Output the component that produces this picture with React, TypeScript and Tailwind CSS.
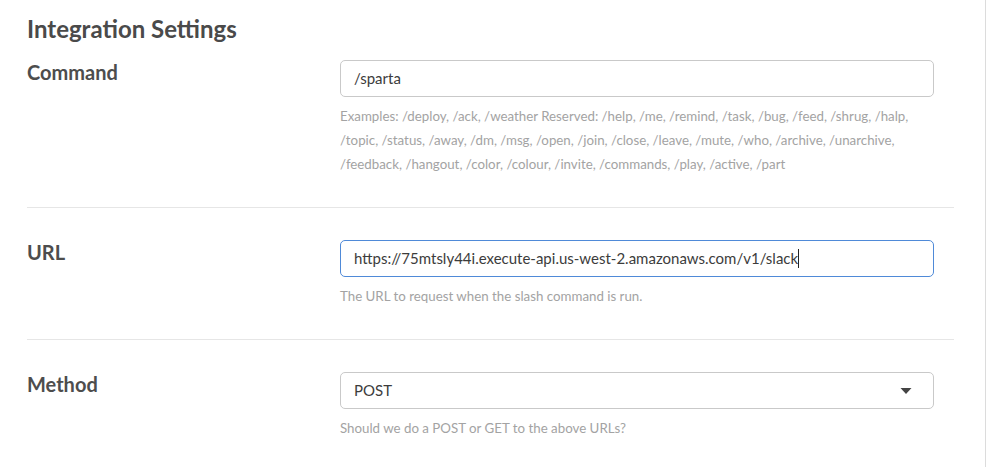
import React from "react";

const reserved =
  "Examples: /deploy, /ack, /weather Reserved: /help, /me, /remind, /task, /bug, /feed, /shrug, /halp, /topic, /status, /away, /dm, /msg, /open, /join, /close, /leave, /mute, /who, /archive, /unarchive, /feedback, /hangout, /color, /colour, /invite, /commands, /play, /active, /part";

export default function App() {
  return (
    <div className="w-[987px] h-[467px] bg-white overflow-hidden font-['Lato','Liberation_Sans',sans-serif]">
      <div className="w-[986px] h-full border-r border-[#dcdcdc] pl-[27px]">
        <div className="w-[927px]">
          <h2 className="text-[24px] leading-[30px] font-bold text-[#4a4a4a] pt-[14px]">
            Integration Settings
          </h2>

          {/* Command */}
          <FieldRow label="Command" className="pt-[16px] pb-[31px]">
            <TextBox value="/sparta" />
            <Help>{reserved}</Help>
          </FieldRow>

          {/* URL */}
          <FieldRow label="URL" className="border-t border-[#e6e6e6] pt-[32px] pb-[31px]">
            <TextBox
              value="https://75mtsly44i.execute-api.us-west-2.amazonaws.com/v1/slack"
              focused
            />
            <Help>The URL to request when the slash command is run.</Help>
          </FieldRow>

          {/* Method */}
          <FieldRow label="Method" className="border-t border-[#e6e6e6] pt-[32px] pb-[31px]">
            <div className="h-[37px] rounded-[5px] border border-[#c9c9c9] bg-white flex items-center justify-between pl-[13px] pr-[21px] text-[15px] text-[#3c3c3c]">
              <span>POST</span>
              <svg width="12" height="6" viewBox="0 0 12 6">
                <path d="M0.5 0 H11.5 L6 6 Z" fill="#444" />
              </svg>
            </div>
            <Help>Should we do a POST or GET to the above URLs?</Help>
          </FieldRow>
        </div>
      </div>
    </div>
  );
}

const FieldRow = ({ label, className, children }: any) => (
  <div className={`flex ${className}`}>
    <div className="w-[313px] shrink-0 text-[20px] leading-[24px] font-bold text-[#4d4d4d]">
      {label}
    </div>
    <div className="w-[594px]">{children}</div>
  </div>
);

const TextBox = ({ value, focused }: any) => (
  <div
    className={`h-[37px] rounded-[5px] border bg-white flex items-center pl-[13px] text-[15px] text-[#3c3c3c] whitespace-nowrap ${
      focused ? "border-[#4f8ad8]" : "border-[#c9c9c9]"
    }`}
  >
    <span>{value}</span>
    {focused && <span className="inline-block w-px h-[19px] bg-[#222]" />}
  </div>
);

const Help = ({ children }: any) => (
  <p className="mt-[7px] text-[13.3px] leading-[24px] text-[#a3a3a3]">{children}</p>
);
